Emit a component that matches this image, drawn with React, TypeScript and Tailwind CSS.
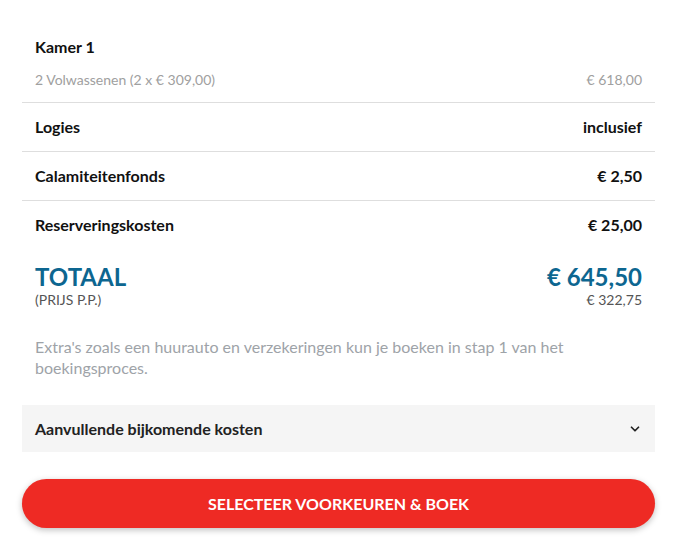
import React from "react";
import { ChevronDown } from "lucide-react";

type Row = { label: string; value: string };

const rows: Row[] = [
  { label: "Logies", value: "inclusief" },
  { label: "Calamiteitenfonds", value: "€ 2,50" },
  { label: "Reserveringskosten", value: "€ 25,00" },
];

export default function App() {
  return (
    <div className="w-[677px] h-[542px] bg-white px-[22px] font-['Lato','Liberation_Sans',sans-serif] text-[#111]">
      {/* Kamer */}
      <div className="px-[13px] pt-[35px] pb-[12px] border-b border-[#dedede]">
        <div className="text-[16px] leading-[24px] font-bold">Kamer 1</div>
        <div className="mt-[11px] flex justify-between text-[14px] leading-[20px] text-[#a0a0a0]">
          <span>2 Volwassenen (2 x € 309,00)</span>
          <span>€ 618,00</span>
        </div>
      </div>

      {rows.map((r, i) => (
        <div
          key={r.label}
          className={
            "px-[13px] flex items-center justify-between text-[16px] font-bold " +
            (i < rows.length - 1 ? "h-[49px] border-b border-[#dedede]" : "h-[48px]")
          }
        >
          <span>{r.label}</span>
          <span>{r.value}</span>
        </div>
      ))}

      {/* Totaal */}
      <div className="px-[13px] mt-[14px] flex justify-between">
        <div>
          <div className="text-[24px] leading-[28px] font-bold text-[#0d6690]">TOTAAL</div>
          <div className="text-[14px] leading-[18px] text-[#555]">(PRIJS P.P.)</div>
        </div>
        <div className="text-right">
          <div className="text-[24px] leading-[28px] font-bold text-[#0d6690]">€ 645,50</div>
          <div className="text-[14px] leading-[18px] text-[#555]">€ 322,75</div>
        </div>
      </div>

      <p className="px-[13px] mt-[27px] text-[16px] leading-[21px] text-[#9ea3a8]">
        Extra's zoals een huurauto en verzekeringen kun je boeken in stap 1 van het boekingsproces.
      </p>

      {/* Accordion */}
      <div className="mt-[27px] h-[47px] bg-[#f5f5f5] px-[13px] flex items-center justify-between">
        <span className="text-[16px] font-bold text-[#222]">Aanvullende bijkomende kosten</span>
        <ChevronDown className="w-[14px] h-[14px] text-[#222]" strokeWidth={3} />
      </div>

      <button className="mt-[27px] w-full h-[49px] rounded-full bg-[#ee2a24] text-white text-[16px] font-bold shadow-[0_2px_6px_rgba(0,0,0,0.25)]">
        SELECTEER VOORKEUREN &amp; BOEK
      </button>
    </div>
  );
}
